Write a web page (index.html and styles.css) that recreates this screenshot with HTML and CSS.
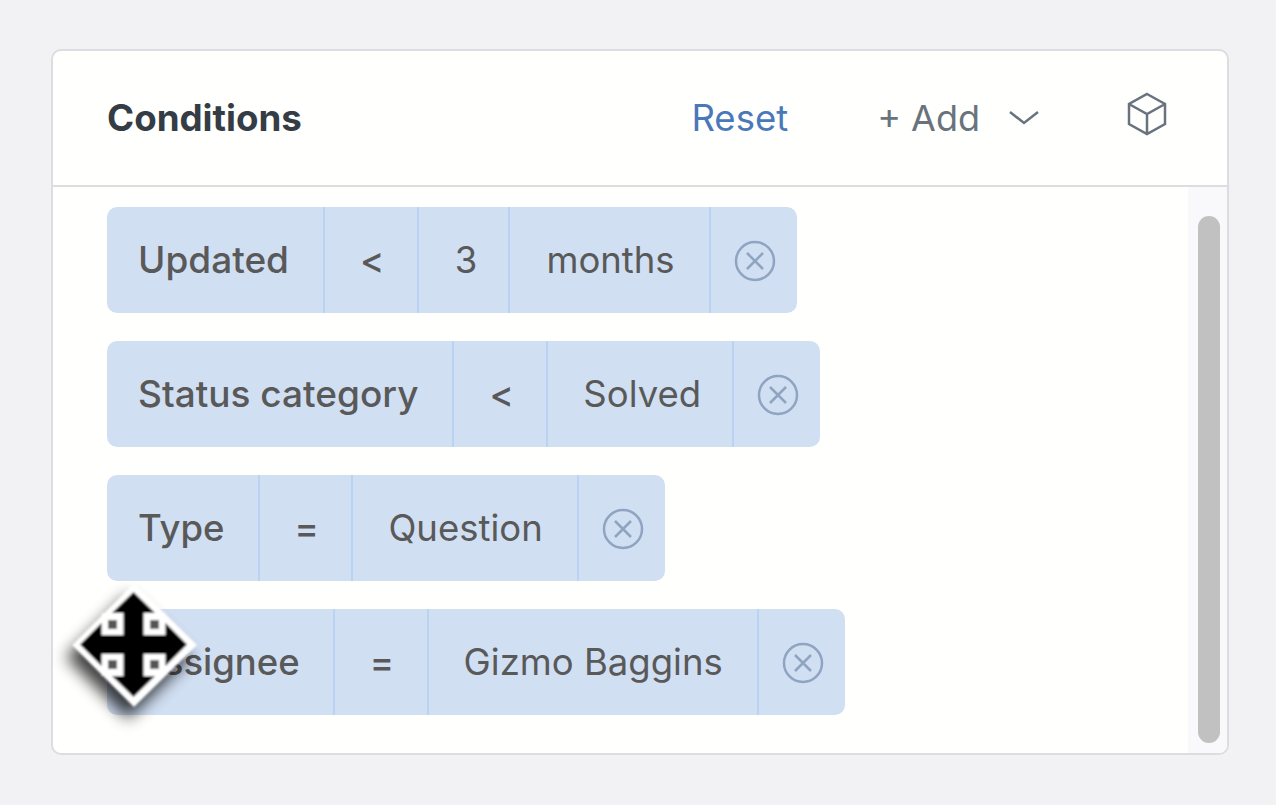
FILE: index.html
```html
<!DOCTYPE html>
<html lang="en">
<head>
<meta charset="utf-8" />
<title>Conditions</title>
<link rel="stylesheet" href="styles.css">
</head>
<body>
<div class="card">
  <div class="card-header">
    <h2 class="title">Conditions</h2>
    <a class="reset">Reset</a>
    <div class="add">
      <span>+ Add</span>
      <svg class="chevron" width="32" height="18" viewBox="0 0 32 18"><path d="M2 3 L16 14 L30 3" /></svg>
    </div>
    <svg class="cube" width="40" height="44" viewBox="0 0 40 44">
      <path d="M20 2 L38 12 L38 32 L20 42 L2 32 L2 12 Z M2 12 L20 22 L38 12 M20 22 L20 42" />
    </svg>
  </div>
  <div class="card-body">
    <div class="list">
      <div class="pill">
        <span class="cell label">Updated</span>
        <span class="cell op">&lt;</span>
        <span class="cell num">3</span>
        <span class="cell wide">months</span>
        <span class="cell close"><svg width="42" height="42" viewBox="0 0 42 42"><circle cx="21" cy="21" r="19" /><path d="M13 13 L29 29 M29 13 L13 29" /></svg></span>
      </div>
      <div class="pill">
        <span class="cell label">Status category</span>
        <span class="cell op">&lt;</span>
        <span class="cell tight">Solved</span>
        <span class="cell close"><svg width="42" height="42" viewBox="0 0 42 42"><circle cx="21" cy="21" r="19" /><path d="M13 13 L29 29 M29 13 L13 29" /></svg></span>
      </div>
      <div class="pill">
        <span class="cell label short">Type</span>
        <span class="cell op">=</span>
        <span class="cell">Question</span>
        <span class="cell close"><svg width="42" height="42" viewBox="0 0 42 42"><circle cx="21" cy="21" r="19" /><path d="M13 13 L29 29 M29 13 L13 29" /></svg></span>
      </div>
      <div class="pill">
        <span class="cell label short">Assignee</span>
        <span class="cell op">=</span>
        <span class="cell">Gizmo Baggins</span>
        <span class="cell close"><svg width="42" height="42" viewBox="0 0 42 42"><circle cx="21" cy="21" r="19" /><path d="M13 13 L29 29 M29 13 L13 29" /></svg></span>
      </div>
    </div>
    <div class="scrollbar"><div class="thumb"></div></div>
  </div>
</div>
<svg class="move-cursor" width="150" height="160" viewBox="0 0 150 160">
  <defs>
    <filter id="cursorBlur" x="-30%" y="-30%" width="160%" height="160%"><feGaussianBlur stdDeviation="8" /></filter>
    <filter id="edgeBlur" x="-10%" y="-10%" width="120%" height="120%"><feGaussianBlur stdDeviation="0.8" /></filter>
  </defs>
  <path d="M74 13 L137 75 L74 137 L12 75 Z" transform="translate(-6 12)" fill="#000" opacity="0.75" filter="url(#cursorBlur)" />
  <g filter="url(#edgeBlur)">
    <path d="M74 13 L137 75 L74 137 L12 75 Z" fill="#fff" />
    <rect x="41.500" y="43" width="64" height="63" fill="#fff" />
    <path d="M73.500 22 L95 43 L83.500 43 L83.500 65 L105.500 65 L105.500 53 L127 74.500 L105.500 96 L105.500 84 L83.500 84 L83.500 106 L95 106 L73.500 127 L52 106 L63.500 106 L63.500 84 L41.500 84 L41.500 96 L20 74.500 L41.500 53 L41.500 65 L63.500 65 L63.500 43 L52 43 Z" fill="#000" />
    <rect x="48" y="50" width="9" height="9" fill="#555" />
    <rect x="90" y="50" width="9" height="9" fill="#555" />
    <rect x="48" y="90" width="9" height="9" fill="#555" />
    <rect x="90" y="90" width="9" height="9" fill="#555" />
  </g>
</svg>
</body>
</html>
```

FILE: styles.css
```css
html, body {
  height: 100%;
}

body {
  font-family: Inter, "Liberation Sans", sans-serif;
  background-color: #f2f2f5;
  margin: 0;
  padding: 49px 47px 50px 51px;
  box-sizing: border-box;
  overflow: hidden;
  position: relative;
}

.card {
  height: 706px;
  background-color: #fffffe;
  border: 2px solid #dcdde1;
  border-radius: 10px;
  box-sizing: border-box;
  display: flex;
  flex-direction: column;
  overflow: hidden;
}

.card-header {
  height: 136px;
  flex-shrink: 0;
  box-sizing: border-box;
  border-bottom: 2px solid #dcdde1;
  display: flex;
  align-items: center;
  padding: 0 60px 0 54px;
}

.title {
  font-size: 36.7px;
  font-weight: 700;
  color: #343d45;
  margin: 0 0 2px;
  flex: 1;
}

.reset {
  font-size: 36.5px;
  color: #4a78b8;
  margin-right: 89px;
}

.add {
  display: flex;
  align-items: center;
  gap: 28px;
  font-size: 36px;
  color: #68737d;
  margin-right: 87px;
}

.chevron path,
.cube path {
  fill: none;
  stroke: #68737d;
  stroke-width: 2.5;
}

.cube {
  margin-bottom: 8px;
}

.card-body {
  flex: 1;
  display: flex;
  min-height: 0;
}

.list {
  flex: 1;
  display: flex;
  flex-direction: column;
  align-items: flex-start;
  gap: 28px;
  padding: 20px 0 0 54px;
}

.pill {
  height: 106px;
  display: flex;
  background-color: #d1dff3;
  border-radius: 10px;
  font-size: 36.5px;
  color: #595959;
}

.cell {
  display: flex;
  align-items: center;
  padding: 0 34px 0 35px;
  border-right: 2px solid #bbd3f3;
}

.label {
  padding: 0 34px 2px 31px;
  font-size: 37px;
  font-weight: 500;
}

.short {
  padding: 0 33px 0 31px;
  font-size: 36.5px;
}

.op {
  padding: 0 32.5px 0 35px;
  font-weight: 500;
}

.num {
  padding: 0 31px 0 36px;
}

.wide {
  padding-left: 36px;
}

.tight {
  padding-right: 31px;
}

.close {
  border-right: none;
  padding: 2px 21px 0 23px;
}

.close circle,
.close path {
  fill: none;
  stroke: #8ea4c0;
  stroke-width: 2.5;
}

.scrollbar {
  width: 39px;
  flex-shrink: 0;
  background-color: #f9f9fc;
  padding: 29px 7px 10px 10px;
  box-sizing: border-box;
}

.thumb {
  height: 100%;
  background-color: #c1c1c1;
  border-radius: 11px;
}

.move-cursor {
  position: absolute;
  left: 60px;
  top: 570px;
  overflow: visible;
}
```
